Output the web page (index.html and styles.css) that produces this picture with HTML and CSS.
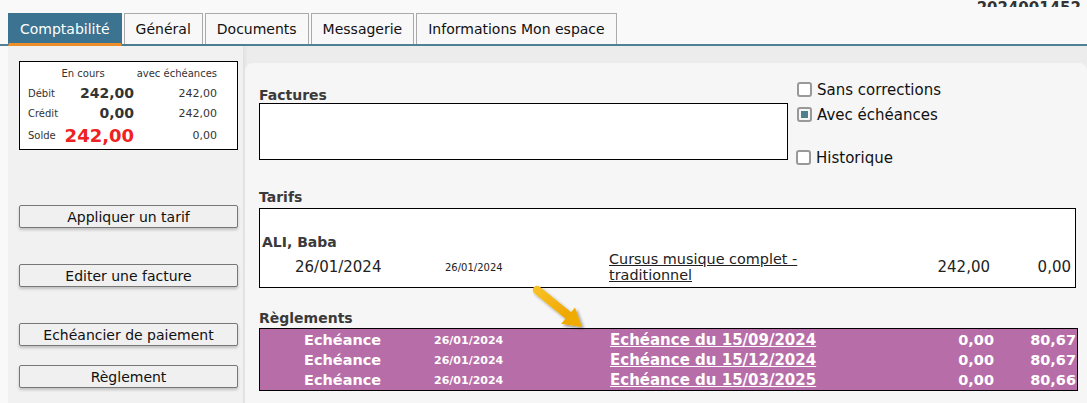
FILE: index.html
```html
<!DOCTYPE html>
<html lang="fr">
<head>
    <meta charset="UTF-8">
    <title>Comptabilité</title>
    <link rel="stylesheet" href="styles.css">
</head>
<body>
    <div class="account-ref"><span>2024001452</span></div>

    <div class="tabs">
        <div class="tab active">Comptabilité</div>
        <div class="tab">Général</div>
        <div class="tab">Documents</div>
        <div class="tab">Messagerie</div>
        <div class="tab">Informations Mon espace</div>
    </div>

    <div class="main">
        <div class="side">
            <table class="summary">
                <tr class="summary-head">
                    <td></td>
                    <td class="c">En cours</td>
                    <td class="r">avec échéances</td>
                </tr>
                <tr>
                    <td class="lbl">Débit</td>
                    <td class="big">242,00</td>
                    <td class="small">242,00</td>
                </tr>
                <tr>
                    <td class="lbl">Crédit</td>
                    <td class="big">0,00</td>
                    <td class="small">242,00</td>
                </tr>
                <tr>
                    <td class="lbl">Solde</td>
                    <td class="big red">242,00</td>
                    <td class="small">0,00</td>
                </tr>
            </table>

            <button class="btn btn-tarif">Appliquer un tarif</button>
            <button class="btn btn-facture">Editer une facture</button>
            <button class="btn btn-echeancier">Echéancier de paiement</button>
            <button class="btn btn-reglement">Règlement</button>
        </div>

        <div class="content">
            <div class="factures">
                <div class="factures-left">
                    <h4>Factures</h4>
                    <div class="box factures-box"></div>
                </div>
                <div class="options">
                    <label class="check"><span class="cb"></span>Sans corrections</label>
                    <label class="check"><span class="cb on"></span>Avec échéances</label>
                    <label class="check hist"><span class="cb"></span>Historique</label>
                </div>
            </div>

            <h4 class="section">Tarifs</h4>
            <div class="box tarifs">
                <div class="person">ALI, Baba</div>
                <div class="tarif-row">
                    <span class="date">26/01/2024</span>
                    <span class="date-small">26/01/2024</span>
                    <a href="#" class="link">Cursus musique complet - traditionnel</a>
                    <span class="num">242,00</span>
                    <span class="num">0,00</span>
                </div>
            </div>

            <h4 class="section reg-title">Règlements</h4>
            <div class="box reglements">
                <div class="reg-row">
                    <span>Echéance</span>
                    <span class="date-small">26/01/2024</span>
                    <a href="#" class="link">Echéance du 15/09/2024</a>
                    <span class="num">0,00</span>
                    <span class="num">80,67</span>
                </div>
                <div class="reg-row">
                    <span>Echéance</span>
                    <span class="date-small">26/01/2024</span>
                    <a href="#" class="link">Echéance du 15/12/2024</a>
                    <span class="num">0,00</span>
                    <span class="num">80,67</span>
                </div>
                <div class="reg-row">
                    <span>Echéance</span>
                    <span class="date-small">26/01/2024</span>
                    <a href="#" class="link">Echéance du 15/03/2025</a>
                    <span class="num">0,00</span>
                    <span class="num">80,66</span>
                </div>
            </div>

            <!-- flèche d'annotation -->
            <svg class="arrow" width="60" height="50" viewBox="0 0 60 50">
                <defs>
                    <filter id="sh" x="-20%" y="-20%" width="150%" height="150%">
                        <feDropShadow dx="2" dy="2" stdDeviation="1.5" flood-color="#000" flood-opacity="0.4"/>
                    </filter>
                    <linearGradient id="gold" x1="0" y1="0" x2="1" y2="1">
                        <stop offset="0" stop-color="#f8c024"/>
                        <stop offset="1" stop-color="#eea600"/>
                    </linearGradient>
                </defs>
                <g filter="url(#sh)">
                    <line x1="5" y1="5" x2="37" y2="31" stroke="url(#gold)" stroke-width="8.5" stroke-linecap="round"/>
                    <polygon points="29.2,38.8 43,22.4 50,42" fill="#efab00"/>
                </g>
            </svg>
        </div>
    </div>
</body>
</html>
```

FILE: styles.css
```css
* {
    box-sizing: border-box;
}

body {
    margin: 0;
    background: #f9f9f9;
    font-family: "DejaVu Sans", Verdana, sans-serif;
    font-size: 14px;
    color: #222;
    overflow: hidden;
}

.account-ref {
    height: 7px;
    overflow: hidden;
    text-align: right;
    padding-right: 6px;
}

.account-ref span {
    display: inline-block;
    margin-top: -8px;
    font-weight: bold;
    font-size: 15px;
    line-height: 16px;
    color: #333;
}

/* onglets */
.tabs {
    display: flex;
    align-items: flex-end;
    gap: 2px;
    padding: 6px 0 0 8px;
    border-bottom: 2px solid #4d8196;
}

.tab {
    height: 31px;
    line-height: 30px;
    padding: 0 11px;
    background: #f8f8f8;
    border: 1px solid #aaa;
    border-bottom: none;
    font-size: 14px;
    color: #111;
}

.tab.active {
    height: 33px;
    margin-bottom: -2px;
    background: #3b7390;
    border-color: #3b7390;
    border-bottom: 3px solid #f0902a;
    color: #fff;
    line-height: 31px;
}

/* zone principale */
.main {
    display: flex;
    margin-left: 8px;
    background: #ececec;
    height: 360px;
}

.side {
    width: 235px;
    padding: 15px 4px 0 11px;
    background: #f1f1f1;
    box-shadow: 2px 0 4px rgba(0,0,0,0.06);
}

.summary {
    width: 219px;
    height: 89px;
    background: #fff;
    border: 1px solid #000;
    border-collapse: collapse;
    font-size: 10px;
    color: #333;
}

.summary td {
    padding: 0;
}

.summary-head td {
    height: 22px;
    padding-top: 2px;
}

.summary .c {
    text-align: center;
    padding-right: 26px;
}

.summary .r {
    text-align: right;
    padding-right: 20px;
}

.summary .lbl {
    width: 38px;
    padding-left: 8px;
}

.summary .big {
    width: 76px;
    text-align: right;
    font-weight: bold;
    font-size: 14px;
    color: #333;
}

.summary .big.red {
    font-size: 18px;
    color: #ee2222;
}

.summary .small {
    text-align: right;
    padding-right: 20px;
    font-size: 11px;
}

.btn {
    display: block;
    width: 219px;
    height: 23px;
    padding: 0;
    background: #f0f0f0;
    border: 1px solid #777;
    border-radius: 2px;
    box-shadow: 0 2px 3px rgba(0,0,0,0.2);
    font-family: "DejaVu Sans", Verdana, sans-serif;
    font-size: 14px;
    color: #111;
}

.btn-tarif { margin-top: 55px; }
.btn-facture { margin-top: 36px; }
.btn-echeancier { margin-top: 36px; }
.btn-reglement { margin-top: 19px; }

/* panneau de droite */
.content {
    position: relative;
    flex: 1;
    margin: 17px 0 0 2px;
    padding: 0 0 0 14px;
    background: #f6f6f6;
    border-radius: 8px 8px 0 0;
}

h4 {
    margin: 0;
    font-size: 14px;
    color: #3a3a3a;
    line-height: 15px;
}

.box {
    background: #fff;
    border: 1px solid #000;
}

.factures {
    display: flex;
    height: 97px;
}

.factures-left {
    padding-top: 25px;
}

.factures-box {
    width: 529px;
    height: 57px;
}

.options {
    padding: 14px 0 0 9px;
    font-size: 15px;
}

.check {
    display: flex;
    align-items: center;
    height: 25px;
    color: #111;
}

.check.hist {
    margin-top: 18px;
    margin-left: -1px;
}

.cb {
    width: 15px;
    height: 15px;
    margin-right: 5px;
    border: 2px solid #999;
    border-radius: 3px;
    background: #fff;
}

.cb.on {
    padding: 2px;
    background: #4f7f8f content-box;
}

.section {
    margin-top: 30px;
    height: 18px;
}

.tarifs {
    width: 817px;
    height: 80px;
    padding-top: 25px;
}

.person {
    padding-left: 2px;
    font-weight: bold;
    font-size: 14px;
    color: #3a3a3a;
    line-height: 16px;
}

.tarif-row {
    display: grid;
    grid-template-columns: 150px 164px 230px 151px 81px;
    align-items: center;
    padding: 1px 0 0 35px;
    font-size: 15px;
    line-height: 17px;
}

.date-small {
    font-size: 10px;
}

.tarif-row .link {
    font-size: 14.4px;
    line-height: 16px;
}

.link {
    color: inherit;
}

.num {
    text-align: right;
}

.reg-title {
    margin-top: 23px;
    height: 17px;
}

.reglements {
    width: 819px;
    height: 63px;
    padding-top: 1px;
    background: #b76ea8;
    color: #fff;
    font-weight: bold;
}

.reg-row {
    display: grid;
    grid-template-columns: 130px 176px 230px 154px 82px;
    align-items: center;
    height: 20px;
    padding-left: 44px;
    font-size: 14.5px;
}

.reg-row .date-small {
    font-size: 11px;
}

.reg-row .link {
    font-size: 15px;
}

.arrow {
    position: absolute;
    left: 287px;
    top: 222px;
}
```
